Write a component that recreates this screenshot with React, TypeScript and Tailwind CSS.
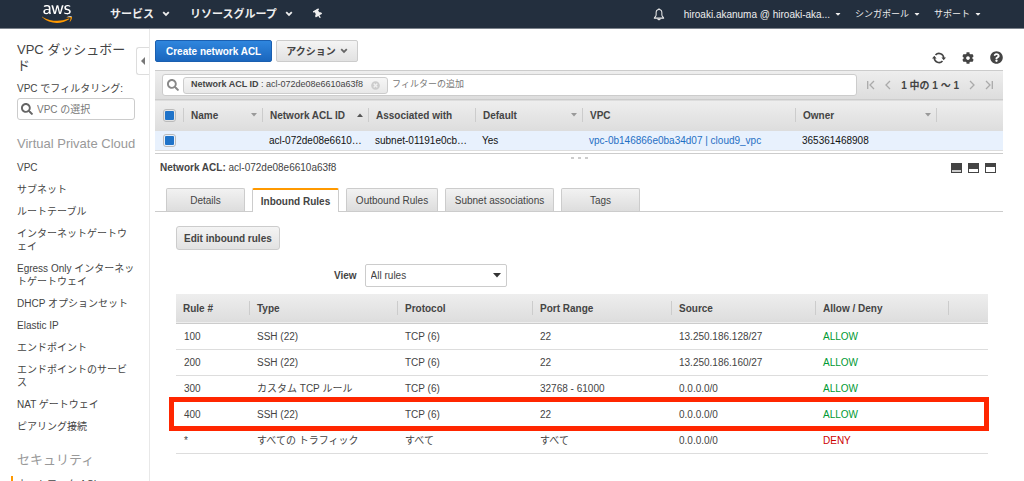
import { useState } from 'react';
import type { ReactNode } from 'react';
import { FaAws, FaCaretDown, FaCog, FaQuestionCircle, FaSearch, FaThumbtack, FaTimesCircle } from 'react-icons/fa';

interface Rule {
  number: string;
  type: string;
  protocol: string;
  ports: string;
  source: string;
  action: 'ALLOW' | 'DENY';
  highlighted?: boolean;
}

const VPC_LINKS = [
  'VPC',
  'サブネット',
  'ルートテーブル',
  'インターネットゲートウェイ',
  'Egress Only インターネットゲートウェイ',
  'DHCP オプションセット',
  'Elastic IP',
  'エンドポイント',
  'エンドポイントのサービス',
  'NAT ゲートウェイ',
  'ピアリング接続',
];

const TABS = [
  { name: 'Details', width: 'w-[79px]' },
  { name: 'Inbound Rules', width: 'w-[87px]' },
  { name: 'Outbound Rules', width: 'w-[92px]' },
  { name: 'Subnet associations', width: 'w-[109px]' },
  { name: 'Tags', width: 'w-[79px]' },
];

const RULES: Rule[] = [
  { number: '100', type: 'SSH (22)', protocol: 'TCP (6)', ports: '22', source: '13.250.186.128/27', action: 'ALLOW' },
  { number: '200', type: 'SSH (22)', protocol: 'TCP (6)', ports: '22', source: '13.250.186.160/27', action: 'ALLOW' },
  { number: '300', type: 'カスタム TCP ルール', protocol: 'TCP (6)', ports: '32768 - 61000', source: '0.0.0.0/0', action: 'ALLOW' },
  { number: '400', type: 'SSH (22)', protocol: 'TCP (6)', ports: '22', source: '0.0.0.0/0', action: 'ALLOW', highlighted: true },
  { number: '*', type: 'すべての トラフィック', protocol: 'すべて', ports: 'すべて', source: '0.0.0.0/0', action: 'DENY' },
];

function Chevron({ className }: { className?: string }) {
  return (
    <svg viewBox="0 0 8 6" className={`h-[6px] w-[8px] ${className ?? ''}`} fill="none" stroke="currentColor" strokeWidth="1.8">
      <path d="M1.2 1.2 4 4l2.8-2.8" />
    </svg>
  );
}

function BellIcon() {
  return (
    <svg viewBox="0 0 12 14" className="h-[13px] w-3" fill="none" stroke="currentColor" strokeWidth="1.1" strokeLinejoin="round">
      <path d="M6 1.5C3.9 1.5 2.9 3 2.9 5v2.6C2.9 8.8 1.6 9.6.9 10.9h10.2C10.4 9.6 9.1 8.8 9.1 7.6V5c0-2-1-3.500-3.100-3.500Z" />
      <path d="M6 .3v1M4.600 11.400c.2.9.7 1.300 1.400 1.300s1.200-.4 1.400-1.300" />
    </svg>
  );
}

function RefreshIcon() {
  return (
    <svg viewBox="0 0 14 12" className="h-3 w-[14px]">
      <path d="M3.500 3A4.700 4.700 0 0 1 11.700 6M10.500 9A4.700 4.700 0 0 1 2.300 6" fill="none" stroke="currentColor" strokeWidth="1.600" />
      <path d="M9.400 5.600H14L11.700 8.200ZM4.600 6.400H0L2.300 3.800Z" fill="currentColor" />
    </svg>
  );
}

// The dark part is the share of the split view that the list takes
function PaneIcon({ lower }: { lower: number }) {
  return (
    <svg viewBox="0 0 11 10" className="h-[10px] w-[11px]">
      <rect width="11" height="10" fill="#444" />
      <rect x="1" y={9 - lower} width="9" height={lower} fill={lower === 2 ? '#ccc' : '#fff'} />
    </svg>
  );
}

function PagerButton({ label, path }: { label: string; path: string }) {
  return (
    <button type="button" aria-label={label} className="text-[#aaa]">
      <svg viewBox="0 0 8 10" className="h-[10px] w-2" fill="none" stroke="currentColor" strokeWidth="1.3">
        <path d={path} />
      </svg>
    </button>
  );
}

function HeaderCell({ children, sort }: { children?: ReactNode; sort?: 'up' | 'down' }) {
  return (
    <th className="p-0 text-left font-bold">
      <div className="flex h-[14px] items-center justify-between border-l border-[#ccc] pr-[5px] pl-[7px]">
        <span className="whitespace-nowrap">{children}</span>
        {sort && (
          <svg viewBox="0 0 6 4" className={sort === 'up' ? 'h-1 w-[6px] rotate-180 text-[#555]' : 'h-1 w-[6px] text-[#999]'}>
            <path d="M0 0h6L3 3.500Z" fill="currentColor" />
          </svg>
        )}
      </div>
    </th>
  );
}

function TickBox({ label }: { label: string }) {
  return (
    <input
      type="checkbox"
      aria-label={label}
      defaultChecked
      className="block size-[13px] appearance-none rounded-[3px] border border-[#bbb] bg-clip-content p-px checked:bg-[#1f73c9]"
    />
  );
}

function NavBar() {
  return (
    <header className="flex h-[29px] shrink-0 items-center border-b border-[#7b828b] bg-[#232f3e] pr-[42px] pl-[42px] text-[#eee]">
      <a href="#home" aria-label="AWS" className="mr-[38px]">
        <svg className="absolute size-0">
          <linearGradient id="aws-logo" gradientUnits="userSpaceOnUse" x1="0" y1="0" x2="0" y2="512">
            <stop offset="0.61" stopColor="#fff" />
            <stop offset="0.61" stopColor="#f90" />
          </linearGradient>
        </svg>
        <FaAws className="h-[24px] w-[30px] [&_path]:fill-[url(#aws-logo)]" />
      </a>
      <button type="button" className="flex items-center gap-2 text-[11px] font-bold">
        サービス <Chevron />
      </button>
      <button type="button" className="ml-5 flex items-center gap-2 text-[11px] font-bold">
        リソースグループ <Chevron />
      </button>
      <button type="button" aria-label="Pin" className="ml-5">
        <FaThumbtack className="size-[10px] -rotate-30" />
      </button>
      <div className="ml-auto flex items-center text-[10px]">
        <button type="button" aria-label="Notifications" className="mr-[19px]">
          <BellIcon />
        </button>
        <button type="button" className="mr-[13px] flex items-center gap-1">
          hiroaki.akanuma @ hiroaki-aka... <FaCaretDown className="size-2" />
        </button>
        <button type="button" className="mr-[13px] flex items-center gap-1 text-[9px] leading-4">
          シンガポール <FaCaretDown className="size-2" />
        </button>
        <button type="button" className="flex items-center gap-1 text-[9px] leading-4">
          サポート <FaCaretDown className="size-2" />
        </button>
      </div>
    </header>
  );
}

function Sidebar() {
  return (
    <aside className="relative w-[150px] shrink-0 overflow-hidden border-r border-[#e8e8e8] pt-[13px] pr-[14px] pl-[17px]">
      <h1 className="text-[13px] leading-4 break-all text-[#444]">VPC ダッシュボード</h1>
      <label htmlFor="vpc-filter" className="mt-2 block text-[10px] leading-[13px] whitespace-nowrap">
        VPC でフィルタリング:
      </label>
      <div className="mt-[3px] flex h-[22px] items-center gap-1 rounded-[3px] border border-[#ccc] px-[3px]">
        <FaSearch className="size-3 shrink-0 text-[#666]" />
        <input id="vpc-filter" placeholder="VPC の選択" className="w-full min-w-0 text-[10px] outline-none placeholder:text-[#777]" />
      </div>
      <h2 className="mt-4 text-[13px] leading-4 whitespace-nowrap text-[#999]">Virtual Private Cloud</h2>
      <nav className="mt-[9px] flex flex-col gap-[9px] text-[10px] leading-[13px]">
        {VPC_LINKS.map((link) => (
          <a key={link} href="#vpc" className="break-all">
            {link}
          </a>
        ))}
      </nav>
      <h2 className="mt-[19px] text-[13px] leading-4 text-[#999]">セキュリティ</h2>
      <a href="#acl" className="mt-2 -ml-[6px] block border-l-2 border-[#f90] pl-1 text-[10px] leading-[17px] whitespace-nowrap">
        ネットワーク ACL
      </a>
      <button
        type="button"
        aria-label="Collapse"
        className="absolute top-[18px] right-0 flex h-7 w-[13px] items-center justify-center rounded-l-[3px] border border-r-0 border-[#ddd] bg-white"
      >
        <svg viewBox="0 0 4 8" className="h-2 w-1">
          <path d="M4 0v8L0 4Z" fill="#777" />
        </svg>
      </button>
    </aside>
  );
}

function FilterBar() {
  return (
    <div className="flex h-[29px] items-center border-t border-[#ccc] bg-linear-to-b from-[#eee] to-[#ddd] pr-[10px] pl-[7px]">
      <div className="flex h-[22px] flex-1 items-center rounded-[3px] border border-[#ccc] bg-white px-1 text-[9px]">
        <FaSearch className="size-3 shrink-0 text-[#888]" />
        <span className="ml-1 flex h-[17px] items-center rounded-[3px] border border-[#ccc] bg-linear-to-b from-[#f6f6f6] to-[#e8e8e8] px-[7px] whitespace-nowrap">
          <b>Network ACL ID</b>&nbsp;: acl-072de08e6610a63f8
          <button type="button" aria-label="Remove filter" className="ml-2 text-[#ccc]">
            <FaTimesCircle className="size-[9px]" />
          </button>
        </span>
        <input aria-label="フィルターの追加" placeholder="フィルターの追加" className="ml-1 min-w-0 flex-1 outline-none placeholder:text-[#777]" />
      </div>
      <div className="ml-[10px] flex items-center gap-[9px]">
        <PagerButton label="First" path="M.7 1v8M7 1 3 5l4 4" />
        <PagerButton label="Previous" path="M6 1 2 5l4 4" />
        <b className="whitespace-nowrap">1 中の 1 〜 1</b>
        <PagerButton label="Next" path="m2 1 4 4-4 4" />
        <PagerButton label="Last" path="M7.300 1v8M1 1l4 4-4 4" />
      </div>
    </div>
  );
}

function AclTable() {
  return (
    <table className="w-full table-fixed">
      <colgroup>
        <col className="w-[28px]" />
        <col className="w-[79px]" />
        <col className="w-[106px]" />
        <col className="w-[107px]" />
        <col className="w-[107px]" />
        <col className="w-[213px]" />
        <col className="w-[141px]" />
        <col />
      </colgroup>
      <thead>
        <tr className="h-[31px] border-t border-[#ccc] bg-linear-to-b from-[#eee] to-[#ddd]">
          <th className="p-0 pl-2">
            <TickBox label="Select all" />
          </th>
          <HeaderCell sort="down">Name</HeaderCell>
          <HeaderCell sort="up">Network ACL ID</HeaderCell>
          <HeaderCell>Associated with</HeaderCell>
          <HeaderCell sort="down">Default</HeaderCell>
          <HeaderCell>VPC</HeaderCell>
          <HeaderCell sort="down">Owner</HeaderCell>
          <HeaderCell />
        </tr>
      </thead>
      <tbody>
        <tr className="h-[20px] border-b border-[#ddd] bg-[#e8f1fd] text-[#111] [&>td]:p-0 [&>td]:pl-[7px]">
          <td>
            <div className="pl-px">
              <TickBox label="Select acl-072de08e6610a63f8" />
            </div>
          </td>
          <td />
          <td className="whitespace-nowrap">acl-072de08e6610…</td>
          <td className="whitespace-nowrap">subnet-01191e0cb…</td>
          <td>Yes</td>
          <td className="whitespace-nowrap">
            <a href="#vpc" className="text-[#1f6fc4]">
              vpc-0b146866e0ba34d07 | cloud9_vpc
            </a>
          </td>
          <td>365361468908</td>
          <td />
        </tr>
      </tbody>
    </table>
  );
}

function RulesTable() {
  return (
    <table className="mt-[7px] w-full table-fixed">
      <colgroup>
        <col className="w-[73px]" />
        <col className="w-[148px]" />
        <col className="w-[135px]" />
        <col className="w-[139px]" />
        <col className="w-[144px]" />
        <col className="w-[133px]" />
        <col />
      </colgroup>
      <thead>
        <tr className="h-[29px] border-b border-[#ccc] bg-linear-to-b from-[#eee] to-[#ddd]">
          <th className="p-0 pl-[7px] text-left font-bold">Rule #</th>
          <HeaderCell>Type</HeaderCell>
          <HeaderCell>Protocol</HeaderCell>
          <HeaderCell>Port Range</HeaderCell>
          <HeaderCell>Source</HeaderCell>
          <HeaderCell>Allow / Deny</HeaderCell>
          <HeaderCell />
        </tr>
      </thead>
      <tbody>
        {RULES.map((rule) => (
          <tr key={rule.number} className="relative h-[26px] border-b border-[#ddd] [&>td]:p-0 [&>td]:pl-2">
            <td>
              {rule.number}
              {rule.highlighted && <div className="absolute -top-1 -right-px -bottom-[5px] -left-[7px] border-5 border-[#ff2600]" />}
            </td>
            <td>{rule.type}</td>
            <td>{rule.protocol}</td>
            <td>{rule.ports}</td>
            <td>{rule.source}</td>
            <td className={rule.action === 'ALLOW' ? 'text-[#093]' : 'text-[#c00]'}>{rule.action}</td>
            <td />
          </tr>
        ))}
      </tbody>
    </table>
  );
}

export default function App() {
  const [tab, setTab] = useState('Inbound Rules');

  return (
    <div className="flex h-screen flex-col overflow-hidden bg-white font-['Liberation_Sans','Noto_Sans_CJK_JP',sans-serif] text-[10px] text-[#444]">
      <NavBar />
      <div className="flex min-h-0 flex-1">
        <Sidebar />
        <main className="min-w-0 flex-1 pt-[11px] pr-[21px] pl-[5px]">
          <div className="flex h-[30px] items-start gap-1">
            <button
              type="button"
              className="h-[22px] rounded-[2px] border border-[#1a5fb0] bg-linear-to-b from-[#2f86de] to-[#1a66bd] px-[10px] font-bold whitespace-nowrap text-white"
            >
              Create network ACL
            </button>
            <button
              type="button"
              className="flex h-[22px] items-center gap-1 rounded-[2px] border border-[#ccc] bg-linear-to-b from-[#f4f4f4] to-[#e2e2e2] px-[9px] font-bold whitespace-nowrap"
            >
              アクション <Chevron className="text-[#666]" />
            </button>
            <div className="ml-auto flex items-center gap-4 self-end pb-[6px]">
              <button type="button" aria-label="Refresh">
                <RefreshIcon />
              </button>
              <button type="button" aria-label="Settings">
                <FaCog className="size-[12px]" />
              </button>
              <button type="button" aria-label="Help">
                <FaQuestionCircle className="size-[13px]" />
              </button>
            </div>
          </div>
          <FilterBar />
          <AclTable />

          <div className="mt-[2px] flex h-2 items-center justify-center gap-1 border-t border-[#ccc]">
            <span className="h-[2px] w-[3px] bg-[#ccc]" />
            <span className="h-[2px] w-[3px] bg-[#ccc]" />
            <span className="h-[2px] w-[3px] bg-[#ccc]" />
          </div>
          <div className="flex items-center justify-between pr-[7px] pl-[5px] leading-[14px]">
            <div>
              <b>Network ACL:</b> acl-072de08e6610a63f8
            </div>
            <div className="flex gap-[6px]">
              <button type="button" aria-label="Small details">
                <PaneIcon lower={2} />
              </button>
              <button type="button" aria-label="Half details">
                <PaneIcon lower={3} />
              </button>
              <button type="button" aria-label="Large details">
                <PaneIcon lower={5} />
              </button>
            </div>
          </div>

          <div role="tablist" className="mt-[13px] flex h-6 items-end gap-[7px] border-b border-[#ccc] pl-[11px]">
            {TABS.map(({ name, width }) => (
              <button
                key={name}
                type="button"
                role="tab"
                aria-selected={tab === name}
                onClick={() => setTab(name)}
                className={`${width} rounded-t-[2px] border border-b-0 whitespace-nowrap ${
                  tab === name
                    ? '-mb-px h-6 border-t-2 border-[#ccc] border-t-[#f90] bg-white font-bold'
                    : 'h-[23px] border-[#ccc] bg-linear-to-b from-[#f2f2f2] to-[#ddd]'
                }`}
              >
                {name}
              </button>
            ))}
          </div>

          <div className="pt-[14px] pr-[15px] pl-[21px]">
            <button
              type="button"
              className="h-6 rounded-[3px] border border-[#ccc] bg-linear-to-b from-[#f4f4f4] to-[#e2e2e2] px-[7px] font-bold whitespace-nowrap"
            >
              Edit inbound rules
            </button>
            <div className="mt-[14px] flex items-center gap-2 pl-[158px]">
              <label htmlFor="view" className="font-bold">
                View
              </label>
              <div className="relative">
                <select id="view" className="h-[23px] w-[142px] appearance-none rounded-[2px] border border-[#ccc] bg-white pl-[5px]">
                  <option>All rules</option>
                  <option>Inbound rules</option>
                </select>
                <svg viewBox="0 0 8 5" className="pointer-events-none absolute top-[9px] right-[6px] h-[5px] w-2">
                  <path d="M0 0h8L4 4.500Z" fill="#333" />
                </svg>
              </div>
            </div>
            <RulesTable />
          </div>
        </main>
      </div>
    </div>
  );
}
